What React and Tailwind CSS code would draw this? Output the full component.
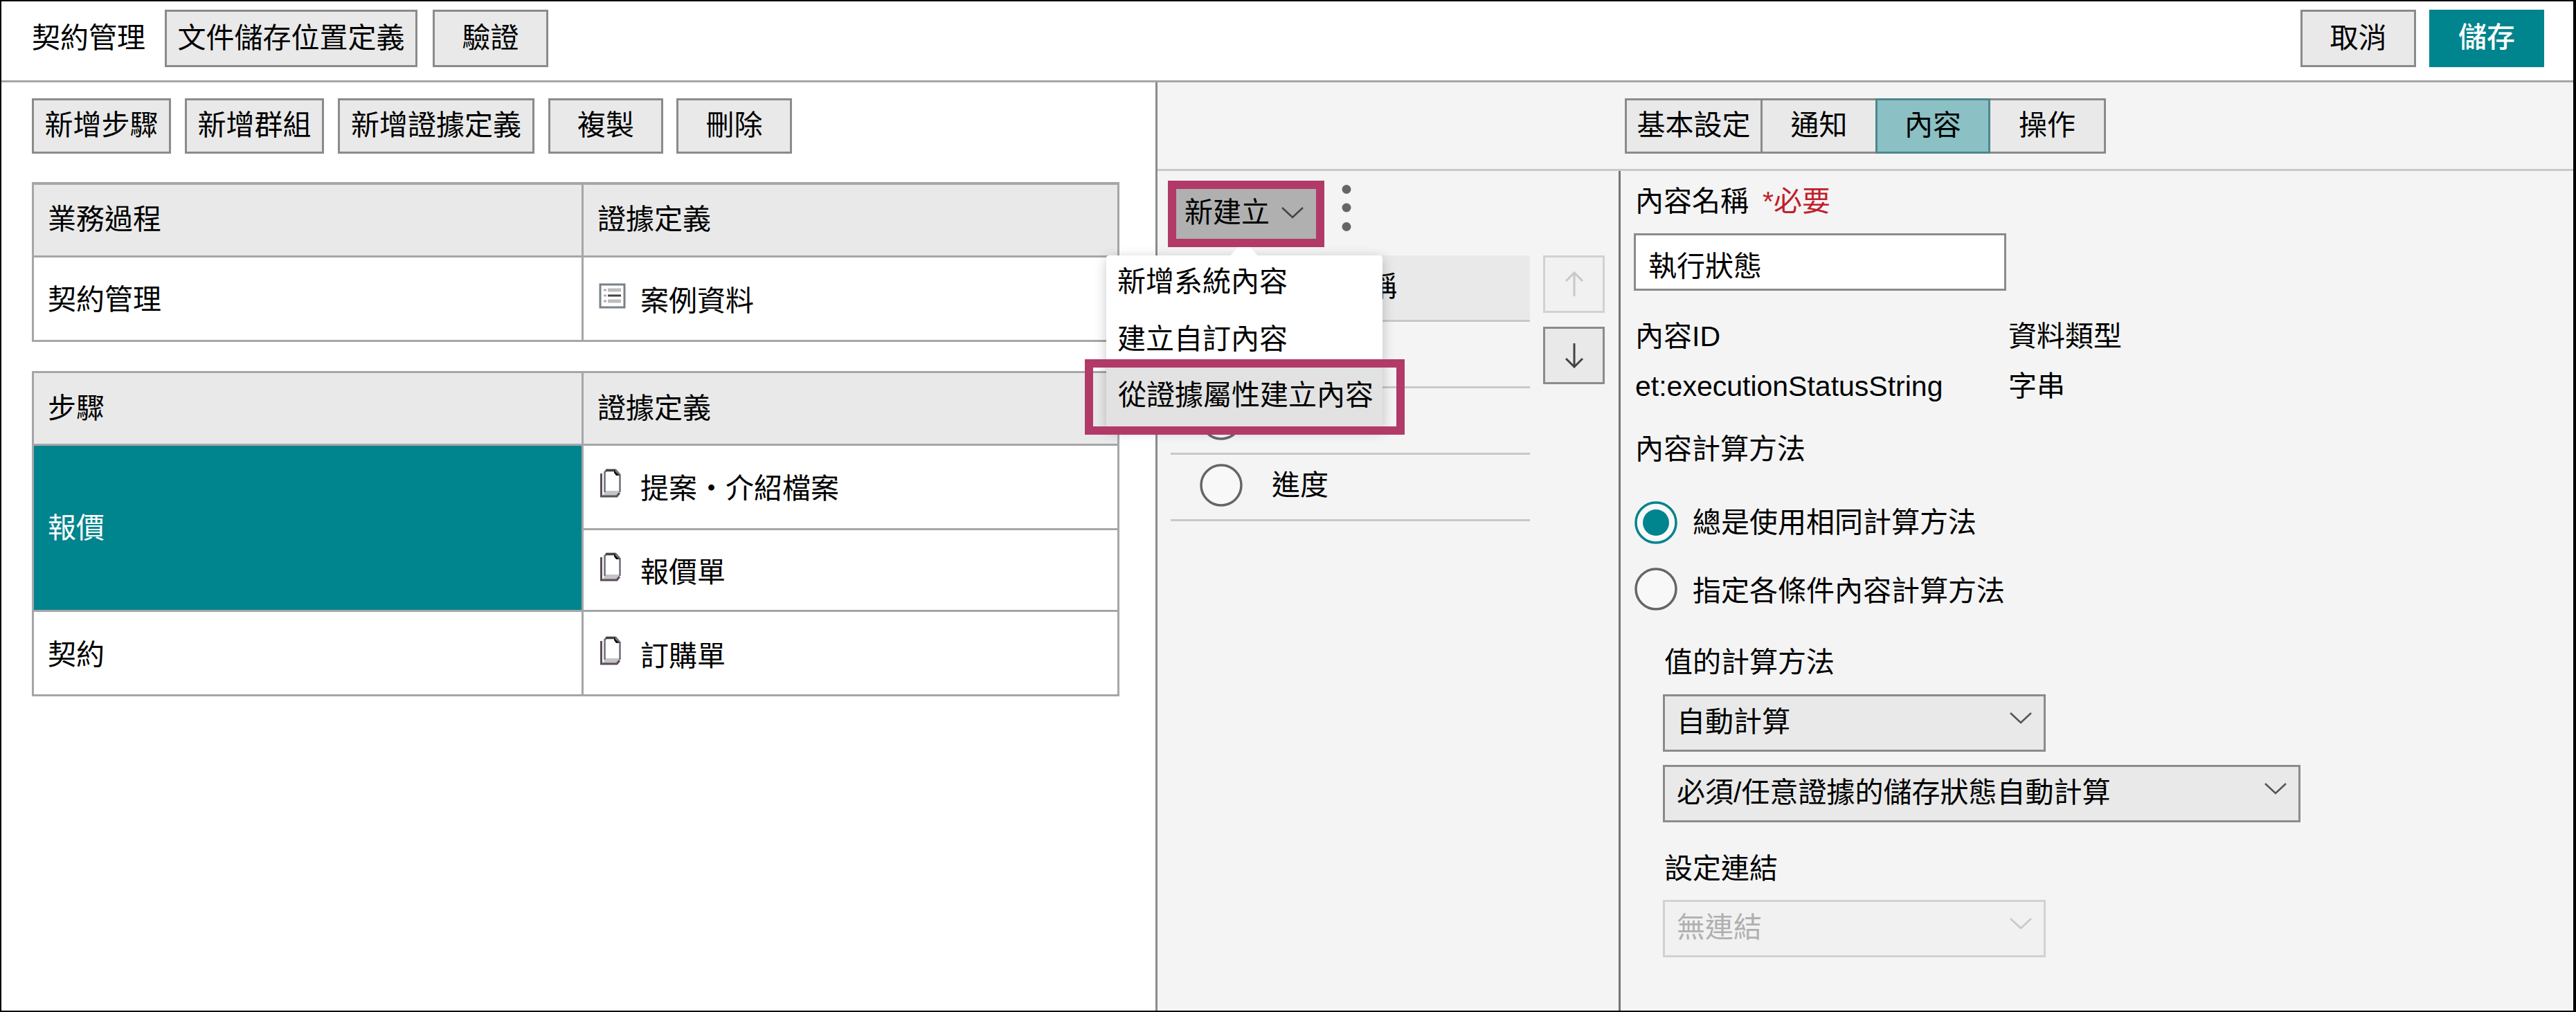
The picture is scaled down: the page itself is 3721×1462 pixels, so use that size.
import { useState } from 'react';
import clsx from 'clsx';

const ListIcon = () => (
  <svg width="39" height="40" viewBox="0 0 39 40" fill="none" className="shrink-0">
    <rect x="2" y="4" width="35" height="33" stroke="#7b8188" strokeWidth="3" />
    <path d="M7 12h4M7 20h4M7 28h4" stroke="#b5aebb" strokeWidth="3" />
    <path d="M13 12h19M13 28h19" stroke="#bdbdbd" strokeWidth="5" />
    <path d="M13 20h19" stroke="#444" strokeWidth="3" />
  </svg>
);

const DocIcon = () => (
  <svg width="34" height="42" viewBox="0 0 34 42" fill="none" className="shrink-0">
    <path d="M9 32h22l-4 7H6z" fill="#c4c4c4" />
    <path d="M8.500 34V5l3-3h13l6 7v25" stroke="#6d6d78" strokeWidth="2.500" />
    <path d="M10 2.500h14" stroke="#444" strokeWidth="3.500" />
    <path d="M22 2l8 8h-5l-3-4z" fill="#111" />
    <path d="M3.500 7v33H26l4-5" stroke="#5c4d5c" strokeWidth="3" />
  </svg>
);

const Chevron = ({ className }) => (
  <svg width="34" height="18" viewBox="0 0 34 18" fill="none" className={clsx('shrink-0', className)}>
    <path d="M2 2l15 14L32 2" stroke="currentColor" strokeWidth="2.5" />
  </svg>
);

const Arrow = ({ down }) => (
  <svg width="28" height="37" viewBox="0 0 28 37" fill="none" className={down ? 'rotate-180' : ''}>
    <path d="M14 36V2M2 14L14 2l12 12" stroke="currentColor" strokeWidth="3" />
  </svg>
);

const Radio = ({ checked }) => (
  <svg width="62" height="62" viewBox="0 0 62 62" className="shrink-0">
    <circle cx="31" cy="31" r="29" fill="#f8f8f8" stroke={checked ? '#00848d' : '#666'} strokeWidth="3.5" />
    {checked && <circle cx="31" cy="31" r="19" fill="#00848d" />}
  </svg>
);

const Button = ({ className, children }) => (
  <button
    type="button"
    className={clsx('flex shrink-0 items-center justify-center whitespace-nowrap border-[3px] border-[#8b8b8b] bg-[#e9e9e9] pb-0.5', className)}
  >
    {children}
  </button>
);

const Select = ({ label, disabled, className }) => (
  <div
    className={clsx(
      'flex h-[83px] justify-between border-[3px] pr-4 pl-[17px]',
      disabled ? 'border-[#d2d2d2] bg-[#f1f1f1] text-[#b0b0b0]' : 'border-[#8b8b8b] bg-[#e9e9e9]',
      className
    )}
  >
    <span className="pt-[13px]">{label}</span>
    <Chevron className={clsx('mt-[22px]', disabled ? 'text-[#c8c8c8]' : 'text-[#555]')} />
  </div>
);

const Evidence = ({ icon, label, className }) => (
  <div className={clsx('flex items-center pl-[22px]', className)}>
    <span className="flex w-[60px] pb-4">{icon}</span>
    <span>{label}</span>
  </div>
);

const nameCell = 'flex w-[794px] shrink-0 items-center border-r-[3px] border-[#a6a6a9] pl-5';

const tabs = [
  { id: 'basic', label: '基本設定', width: 'w-[199px]' },
  { id: 'notice', label: '通知', width: 'w-[163px]' },
  { id: 'content', label: '內容', width: 'w-[166px]' },
  { id: 'action', label: '操作', width: 'w-[167px]' },
];

const ProcessPane = () => (
  <div className="w-[1667px] shrink-0 pt-[23px] pl-11">
    <div className="flex h-20 gap-5">
      <Button className="w-[201px]">新增步驟</Button>
      <Button className="w-[201px]">新增群組</Button>
      <Button className="w-[284px]">新增證據定義</Button>
      <Button className="w-[166px]">複製</Button>
      <Button className="-ml-px w-[167px]">刪除</Button>
    </div>

    <div className="mt-[41px] w-[1571px] border-[3px] border-t-4 border-[#a6a6a9]">
      <div className="flex h-[105px] border-b-[3px] border-[#a6a6a9] bg-[#e9e9e9]">
        <div className={clsx(nameCell, 'pb-0.5')}>業務過程</div>
        <div className="flex items-center pb-0.5 pl-5">證據定義</div>
      </div>
      <div className="flex h-[119px]">
        <div className={clsx(nameCell, 'pt-0.5')}>契約管理</div>
        <Evidence icon={<ListIcon />} label="案例資料" className="pt-1.5" />
      </div>
    </div>

    <div className="mt-[42px] w-[1571px] border-[3px] border-[#a6a6a9]">
      <div className="flex h-[105px] border-b-[3px] border-[#a6a6a9] bg-[#e9e9e9]">
        <div className={nameCell}>步驟</div>
        <div className="flex items-center pl-5">證據定義</div>
      </div>
      <div className="flex h-[240px] border-b-[3px] border-[#a6a6a9]">
        <div className={clsx(nameCell, 'bg-[#00848d] text-white')}>報價</div>
        <div className="flex-1">
          <Evidence icon={<DocIcon />} label="提案・介紹檔案" className="h-[122px] border-b-[3px] border-[#a6a6a9] pt-1" />
          <Evidence icon={<DocIcon />} label="報價單" className="h-[115px] pt-1.5" />
        </div>
      </div>
      <div className="flex h-[119px]">
        <div className={clsx(nameCell, 'pt-1')}>契約</div>
        <Evidence icon={<DocIcon />} label="訂購單" className="pt-2" />
      </div>
    </div>
  </div>
);

const ContentList = () => (
  <div className="relative w-[666px] shrink-0 pt-3.5 pl-[15px]">
    <div className="flex">
      <button type="button" className="flex h-24 w-[226px] items-center border-[12px] border-[#b13a68] bg-[#b0b0b0] pb-1 pl-3">
        新建立
        <Chevron className="ml-4 text-[#444]" />
      </button>
      <svg width="16" height="70" viewBox="0 0 16 70" fill="#666" className="mt-1.5 ml-6">
        <circle cx="8" cy="6.5" r="6.5" />
        <circle cx="8" cy="33" r="6.5" />
        <circle cx="8" cy="60.5" r="6.5" />
      </svg>
    </div>

    <div className="mt-3 ml-1 flex gap-[19px]">
      <div className="w-[519px]">
        <div className="flex h-24 items-center border-b-[3px] border-[#c8c8c8] bg-[#e9e9e9] pb-1 pl-[163px]">內容名稱</div>
        <div className="flex h-24 items-center gap-[42px] border-b-[3px] border-[#c8c8c8] pb-1.5 pl-[42px]">
          <Radio checked />
        </div>
        <div className="flex h-24 items-center gap-[42px] border-b-[3px] border-[#c8c8c8] pb-1.5 pl-[42px]">
          <Radio />
        </div>
        <div className="flex h-24 items-center gap-[42px] border-b-[3px] border-[#c8c8c8] pb-1.5 pl-[42px]">
          <Radio />
          <span>進度</span>
        </div>
      </div>
      <div className="flex flex-col gap-5">
        <button type="button" disabled className="flex h-[83px] w-[89px] items-center justify-center border-[3px] border-[#d2d2d2] bg-[#f1f1f1] text-[#c8c8c8]">
          <Arrow />
        </button>
        <button type="button" className="flex h-[83px] w-[89px] items-center justify-center border-[3px] border-[#8b8b8b] bg-[#e9e9e9] text-[#444]">
          <Arrow down />
        </button>
      </div>
    </div>

    <div className="absolute top-[122px] left-[-74px] h-[250px] w-[399px] rounded bg-white shadow-[0_4px_18px_rgba(0,0,0,0.22)]">
      <svg width="40" height="12" viewBox="0 0 40 12" className="absolute -top-3 left-[179px]">
        <path d="M0 12C6 8 8 0 14 0h12c6 0 8 8 14 12z" fill="#fff" />
      </svg>
      <div className="h-[81px] pt-3.5 pl-4">新增系統內容</div>
      <div className="h-[81px] pt-4 pl-4">建立自訂內容</div>
      <div className="h-[88px] rounded-b bg-[#e2e2e2] pt-4 pl-[17px] whitespace-nowrap">從證據屬性建立內容</div>
    </div>
    <div className="absolute top-[272px] left-[-105px] h-[109px] w-[462px] border-[12px] border-[#b13a68]" />
  </div>
);

const Detail = () => {
  const [name, setName] = useState('執行狀態');

  return (
    <div className="flex-1 border-l-[3px] border-[#757575] pt-5 pl-[19px]">
      <div className="flex gap-5 pl-0.5">
        <span>內容名稱</span>
        <span className="text-[#c01e2c]">*必要</span>
      </div>
      <input
        value={name}
        onChange={(event) => setName(event.target.value)}
        className="mt-[22px] block h-[83px] w-[538px] border-[3px] border-[#8b8b8b] bg-white pt-1 pl-[18px] outline-none"
      />
      <div className="mt-[42px] flex pl-0.5">
        <span className="w-[539px]">內容ID</span>
        <span>資料類型</span>
      </div>
      <div className="mt-6 flex pl-0.5">
        <span className="w-[539px]">et:executionStatusString</span>
        <span>字串</span>
      </div>
      <div className="mt-[43px] pl-0.5">內容計算方法</div>
      <div className="mt-[51px] flex h-[61px] items-center gap-[22px] pl-px">
        <Radio checked />
        <span>總是使用相同計算方法</span>
      </div>
      <div className="mt-[35px] flex h-[61px] items-center gap-[22px] pl-px">
        <Radio />
        <span className="pt-1.5">指定各條件內容計算方法</span>
      </div>
      <div className="mt-[52px] pl-[42px]">
        <div className="pl-0.5">值的計算方法</div>
        <Select label="自動計算" className="mt-[22px] w-[553px]" />
        <Select label="必須/任意證據的儲存狀態自動計算" className="mt-[19px] w-[921px]" />
        <div className="mt-[43px] pl-0.5">設定連結</div>
        <Select label="無連結" disabled className="mt-[21px] w-[553px]" />
      </div>
    </div>
  );
};

const App = () => {
  const [tab, setTab] = useState('content');

  return (
    <div className="flex h-[1462px] w-[3721px] flex-col overflow-hidden border-2 border-r-4 border-black bg-white font-['Liberation_Sans','Noto_Sans_CJK_TC',sans-serif] text-[41px] leading-[48px] text-black">
      <header className="flex h-[117px] shrink-0 border-b-[3px] border-[#a6a6a8] pt-3 pr-[42px] pl-11">
        <div className="w-[192px] pt-[17px]">契約管理</div>
        <Button className="h-[83px] w-[365px]">文件儲存位置定義</Button>
        <Button className="ml-[22px] h-[83px] w-[167px]">驗證</Button>
        <div className="ml-auto flex gap-[19px]">
          <Button className="h-[83px] w-[167px]">取消</Button>
          <button type="button" className="h-[83px] w-[166px] bg-[#00848d] pb-1 font-medium text-white">
            儲存
          </button>
        </div>
      </header>

      <main className="flex flex-1">
        <ProcessPane />
        <section className="flex flex-1 flex-col border-l-[3px] border-[#8b8b8b] bg-[#f4f4f4]">
          <div className="flex h-32 shrink-0 border-b-[3px] border-[#c8c8c8] pt-[23px] pl-[675px]">
            {tabs.map((t, i) => (
              <button
                key={t.id}
                type="button"
                onClick={() => setTab(t.id)}
                className={clsx(
                  'h-20 border-y-[3px] pb-0.5',
                  t.width,
                  i === 0 && 'border-x-[3px]',
                  i === tabs.length - 1 && 'border-r-[3px]',
                  t.id === tab ? 'border-x-[3px] border-[#4e878c] bg-[#8bc0c4]' : 'border-[#8b8b8b] bg-[#e9e9e9]'
                )}
              >
                {t.label}
              </button>
            ))}
          </div>
          <div className="flex flex-1">
            <ContentList />
            <Detail />
          </div>
        </section>
      </main>
    </div>
  );
};

export default App;
